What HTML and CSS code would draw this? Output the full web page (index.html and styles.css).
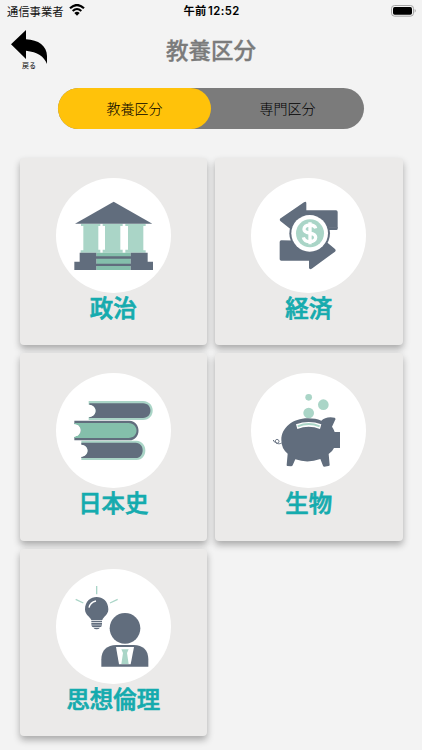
FILE: index.html
```
<!DOCTYPE html>
<html lang="ja">
<head>
    <meta charset="UTF-8">
    <meta name="viewport" content="width=device-width, initial-scale=1.0">
    <title>教養区分</title>
    <link rel="stylesheet" href="styles.css">
</head>
<body>
    <div class="status">
        <div class="carrier">
            <span>通信事業者</span>
            <svg class="wifi" viewBox="0 0 48 36">
                <path d="M3 13Q24 -7 45 13" fill="none" stroke="#000" stroke-width="6.5"/>
                <path d="M11 21Q24 9 37 21" fill="none" stroke="#000" stroke-width="6"/>
                <path d="M16 27Q24 20 32 27L24 35Z"/>
            </svg>
        </div>
        <div class="time">午前 12:52</div>
        <div class="power">
            <svg class="battery" viewBox="0 0 75 36">
                <rect x="1.5" y="1.5" width="66" height="32" rx="9" fill="none" stroke="#a5a5a5" stroke-width="3"/>
                <rect x="6" y="6" width="57" height="23" rx="5"/>
                <path d="M71 12Q77 17 71 23Z" fill="#999"/>
            </svg>
        </div>
    </div>

    <div class="header">
        <a class="back">
            <svg viewBox="0 0 108 102">
                <path d="M0 43L45 0V28C82 29 108 49 108 78V102C99 79 80 66 45 62V87Z"/>
            </svg>
            <span>戻る</span>
        </a>
        <h1>教養区分</h1>
    </div>

    <div class="tabs">
        <div class="tab active">教養区分</div>
        <div class="tab">専門区分</div>
    </div>

    <div class="grid">
        <div class="card">
            <svg class="icon" viewBox="17 22 345 345">
                <path class="light" d="M92 159h58v7h-6v71h6v9H91v-7h8v-73h-7zM157 159h60v7h-7v71h7v9h-60v-9h7v-71h-7zM225 159h61v7h-7v73h7v7h-61v-9h8v-71h-8z"/>
                <path class="dark" d="M190 93L306 159H74Z"/>
                <path class="green" d="M138 246h103v52H138z"/>
                <path class="dark" d="M88 246h50v52H72v-25h16zM241 246h51v27h16v25h-67zM138 257h103v7H138zM138 279h103v7H138z"/>
            </svg>
            <div class="name">政治</div>
        </div>
        <div class="card">
            <svg class="icon" viewBox="18 22 345 345">
                <path class="dark" d="M105 144Q103 148 106 151L141 179V171H274Q278 171 278 174V124Q278 119 273 119H184V97Q183 91 177 95L107 143Z"/>
                <path class="dark" d="M278 170V174Q278 178 274 178H240V170Z"/>
                <path class="dark" d="M109 209Q104 209 104 214V266Q104 270 109 270H192V291Q193 298 200 294L270 243Q274 239 270 235L242 212Z"/>
                <circle cx="194" cy="188" r="61" class="dark"/>
                <circle cx="194" cy="188" r="55" fill="#fff"/>
                <circle cx="195" cy="188" r="42" class="light"/>
                <path d="M212 173C210 165 202 163 194 163C184 163 177 168 177 176C177 194 212 181 212 200C212 208 205 213 195 213C184 213 177 208 175 200M195 155V221" fill="none" stroke="#fff" stroke-width="10"/>
            </svg>
            <div class="name">経済</div>
        </div>
        <div class="card">
            <svg class="icon" viewBox="17 21 345 345">
                <path class="light" d="M115 105H278C317 106 317 162 278 162H115V152H130V116H115Z"/>
                <path class="dark" d="M117 112H278C308 112 308 156 278 156H117V153C142 150 142 119 117 116Z"/>
                <path class="light" d="M93 224H258C294 226 294 281 258 282H93V272H105V235H93Z"/>
                <path class="dark" d="M93 230H256C284 230 284 276 256 276H93V272C118 270 118 238 93 236Z"/>
                <path class="dark" d="M72 164H237C274 166 274 222 237 223H72V213H85V175H72Z"/>
                <path class="green" d="M72 171H234C267 172 267 216 234 216H72V212C98 209 98 177 72 175Z"/>
                <path d="M100 117H117C142 119 142 150 117 153H100ZM76 237H93C118 238 118 270 93 272H76ZM57 175H72C98 177 98 209 72 212H57Z" fill="#fff"/>
            </svg>
            <div class="name">日本史</div>
        </div>
        <div class="card">
            <svg class="icon" viewBox="18 21 345 345">
                <circle cx="191" cy="94" r="10" class="light"/>
                <circle cx="235" cy="116" r="16" class="light"/>
                <circle cx="191" cy="141" r="16" class="light"/>
                <path class="dark" d="M109 222C109 185 144 157 188 157C205 157 217 159 229 164C237 155 253 151 269 155C272 157 272 160 270 163L261 182Q267 190 269 198H285V246H267Q262 257 251 264L254 297Q254 300 250 300L238 302Q235 302 234 299L226 279Q188 293 151 280L143 298Q142 301 138 301L127 300Q124 299 125 296L128 263Q109 248 109 222Z"/>
                <path d="M153 175Q191 161 229 175L225 189Q191 175 157 189Z" fill="#fff"/>
                <path d="M158 181Q191 167 224 181" class="light-line slot"/>
                <path d="M110 231C101 236 91 232 91 225C91 218 103 219 102 227C101 233 92 233 92 228C89 230 86 226 85 222" fill="none" stroke="#616d7d" stroke-width="3"/>
            </svg>
            <div class="name">生物</div>
        </div>
        <div class="card">
            <svg class="icon" viewBox="17 20 345 345">
                <path d="M139 71V96M76 111L99 122M179 122L202 111" class="light-line"/>
                <path class="dark" d="M104 141C104 92 174 92 174 141C174 158 159 163 156 173H123C119 163 104 158 104 141Z"/>
                <path d="M116 136Q119 120 137 116" fill="none" stroke="#fff" stroke-width="4"/>
                <path class="dark" d="M123 175h32v5h-32zM123 182h32v5h-32zM123 189h32q-1 6-7 6h-18q-6 0-7-6zM130 197h18q-2 4-9 4t-9-4z"/>
                <circle cx="224" cy="198" r="46" class="dark"/>
                <path class="dark" d="M153 313V291C153 264 170 248 198 248H250C278 248 294 264 294 291V313Z"/>
                <path d="M197 254H251L241 306H206Z" fill="#fff"/>
                <path class="light" d="M213 261H235L230 272L235 305H213L218 272Z"/>
            </svg>
            <div class="name">思想倫理</div>
        </div>
    </div>
</body>
</html>
```

FILE: styles.css
```
* {
    box-sizing: border-box;
}
body {
    margin: 0;
    height: 750px;
    overflow: hidden;
    background-color: #f3f3f3;
    font-family: "Noto Sans CJK JP", sans-serif;
    color: #222;
}
.status {
    display: grid;
    grid-template-columns: 1fr auto 1fr;
    align-items: center;
    height: 22px;
    padding: 0 6px 0 7px;
    font-size: 11.3px;
    line-height: 22px;
}
.carrier {
    display: flex;
    align-items: center;
    gap: 5px;
    color: #111;
}
.wifi {
    width: 16px;
    height: 12px;
    margin-top: -2px;
}
.time {
    font-family: Inter, "Noto Sans CJK JP", sans-serif;
    font-weight: 600;
    letter-spacing: 0.4px;
    word-spacing: -2px;
    color: #000;
}
.power {
    display: flex;
    justify-content: flex-end;
}
.battery {
    width: 25px;
    height: 12px;
}
.header {
    display: grid;
    grid-template-columns: 58px 1fr 58px;
    height: 66px;
}
.back {
    display: flex;
    flex-direction: column;
    align-items: center;
    padding-top: 8px;
    font-size: 7px;
    line-height: 8px;
    color: #000;
}
.back svg {
    width: 36px;
    height: 34px;
    margin-bottom: -3px;
}
.header h1 {
    margin: 11px 0 0;
    text-align: center;
    font-size: 22.5px;
    line-height: 32px;
    font-weight: 500;
    color: #7b7b7b;
    -webkit-text-stroke: 0.3px #7b7b7b;
}
.tabs {
    display: flex;
    width: 306px;
    height: 41px;
    margin: 0 0 0 58px;
    border-radius: 21px;
    background: #7b7b7b;
}
.tab {
    flex: 1;
    text-align: center;
    font-size: 14px;
    line-height: 41px;
    font-weight: 300;
    color: #000;
}
.active {
    border-radius: 21px;
    background: #ffc20a;
}
.grid {
    display: grid;
    grid-template-columns: repeat(2, 187.5px);
    gap: 8px;
    padding: 28.5px 0 0 19.5px;
}
.card {
    height: 187.5px;
    padding-top: 20px;
    border-radius: 4px;
    background: #ebeae9;
    box-shadow: 0 4px 7px rgba(0, 0, 0, 0.3);
    text-align: center;
}
.icon {
    display: block;
    width: 115px;
    height: 115px;
    margin: 0 auto;
    border-radius: 50%;
    background: #fff;
}
.name {
    font-size: 23.4px;
    line-height: 29px;
    font-weight: 500;
    color: #15abae;
    -webkit-text-stroke: 0.7px #15abae;
}
.dark {
    fill: #616d7d;
}
.light {
    fill: #aad5c7;
}
.green {
    fill: #84bfab;
}
.light-line {
    fill: none;
    stroke: #aad5c7;
    stroke-width: 4;
}
.slot {
    stroke-width: 6;
}
```
